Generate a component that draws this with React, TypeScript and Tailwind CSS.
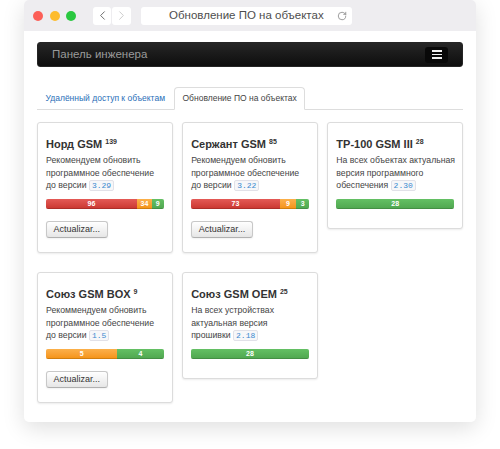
import { ChevronLeft, ChevronRight, RotateCw } from "lucide-react";

type Seg = { value: number; width: string; tone: "red" | "orange" | "green" };

type Product = {
  id: string;
  name: string;
  count: number;
  lines: string[];
  lastLine: string;
  version: string;
  segs: Seg[];
  canUpdate: boolean;
};

const products: Product[] = [
  {
    id: "nord",
    name: "Норд GSM",
    count: 139,
    lines: ["Рекомендуем обновить", "программное обеспечение"],
    lastLine: "до версии",
    version: "3.29",
    segs: [
      { value: 96, width: "77.3%", tone: "red" },
      { value: 34, width: "12.7%", tone: "orange" },
      { value: 9, width: "10%", tone: "green" },
    ],
    canUpdate: true,
  },
  {
    id: "serzhant",
    name: "Сержант GSM",
    count: 85,
    lines: ["Рекомендуем обновить", "программное обеспечение"],
    lastLine: "до версии",
    version: "3.22",
    segs: [
      { value: 73, width: "75.2%", tone: "red" },
      { value: 9, width: "14.3%", tone: "orange" },
      { value: 3, width: "10.5%", tone: "green" },
    ],
    canUpdate: true,
  },
  {
    id: "tr100",
    name: "ТР-100 GSM III",
    count: 28,
    lines: ["На всех объектах актуальная", "версия программного"],
    lastLine: "обеспечения",
    version: "2.30",
    segs: [{ value: 28, width: "100%", tone: "green" }],
    canUpdate: false,
  },
  {
    id: "box",
    name: "Союз GSM BOX",
    count: 9,
    lines: ["Рекоммендуем обновить", "программное обеспечение"],
    lastLine: "до версии",
    version: "1.5",
    segs: [
      { value: 5, width: "60.5%", tone: "orange" },
      { value: 4, width: "39.5%", tone: "green" },
    ],
    canUpdate: true,
  },
  {
    id: "oem",
    name: "Союз GSM OEM",
    count: 25,
    lines: ["На всех устройствах", "актуальная версия"],
    lastLine: "прошивки",
    version: "2.18",
    segs: [{ value: 28, width: "100%", tone: "green" }],
    canUpdate: false,
  },
];

function segClass(tone: Seg["tone"]) {
  if (tone === "red") return "bg-linear-to-b from-[#e45a56] to-[#c9352f]";
  if (tone === "orange") return "bg-linear-to-b from-[#fbb04a] to-[#f5920c]";
  return "bg-linear-to-b from-[#64c064] to-[#4fa64f]";
}

function ProductCard({ p }: { p: Product }) {
  return (
    <div className="rounded-[3px] border border-[#dcdcdc] bg-white px-[8px] pb-[7.5px] pt-[13.5px] text-[9px] leading-[12.5px] shadow-[0_1px_2px_rgba(0,0,0,0.08)]">
      <div className="h-[14px] whitespace-nowrap text-[11px] font-bold leading-[14px] text-[#333]">
        {p.name}{" "}
        <span className="relative top-[-4px] text-[7px] font-bold leading-[8px]">
          {p.count}
        </span>
      </div>

      <div className="mt-[3.5px] text-[8.7px] leading-[12.5px] text-[#444]">
        {p.lines.map((l) => (
          <div key={l} className="h-[12.5px] whitespace-nowrap">
            {l}
          </div>
        ))}
        <div className="h-[12.5px] whitespace-nowrap">
          {p.lastLine}{" "}
          <code className="inline-block rounded-[2px] border border-[#e1e1e8] bg-[#f7f7f9] px-[2px] align-middle font-['Liberation_Mono',monospace] text-[8px] leading-[9px] text-[#3b8ad0]">
            {p.version}
          </code>
        </div>
      </div>

      <div className="mb-[12px] mt-[7px] flex h-[10px] overflow-hidden rounded-[2px] bg-[#f5f5f5] shadow-[inset_0_1px_2px_rgba(0,0,0,0.1)]">
        {p.segs.map((s, i) => (
          <div
            key={i}
            style={{ width: s.width }}
            className={
              "text-center text-[7px] font-bold leading-[10px] text-white shadow-[inset_0_-1px_0_rgba(0,0,0,0.15)] " +
              segClass(s.tone)
            }
          >
            {s.value}
          </div>
        ))}
      </div>

      {p.canUpdate && (
        <button className="mb-[6px] block h-[17.5px] rounded-[3px] border border-[#c8c8c8] border-b-[#b0b0b0] bg-linear-to-b from-white to-[#e6e6e6] px-[6.5px] text-[9px] leading-[15px] text-[#333] shadow-[0_1px_2px_rgba(0,0,0,0.06)]">
          Actualizar...
        </button>
      )}
    </div>
  );
}

export default function App() {
  return (
    <div className="h-[449px] w-[500px] overflow-hidden bg-white font-['Liberation_Sans',Arial,sans-serif]">
      <div className="ml-[24px] flex h-[422px] w-[452px] flex-col overflow-hidden rounded-[5px] bg-white shadow-[0_6px_22px_rgba(0,0,0,0.13)]">
        {/* title bar */}
        <div className="flex h-[31px] shrink-0 items-center bg-[#eeedf0] pl-[9px]">
          <div className="flex items-center gap-[6.7px]">
            <span className="h-[10px] w-[10px] rounded-full bg-[#fc5f57]" />
            <span className="h-[10px] w-[10px] rounded-full bg-[#fdbc2e]" />
            <span className="h-[10px] w-[10px] rounded-full bg-[#2ac840]" />
          </div>
          <div className="ml-[16.5px] flex gap-[1px]">
            <div className="flex h-[18px] w-[18.5px] items-center justify-center rounded-[3px] bg-white">
              <ChevronLeft size={15} strokeWidth={1.4} className="text-[#5a5a5a]" />
            </div>
            <div className="flex h-[18px] w-[18.5px] items-center justify-center rounded-[3px] bg-white">
              <ChevronRight size={15} strokeWidth={1.4} className="text-[#c4c4c4]" />
            </div>
          </div>
          <div className="relative ml-[10px] flex h-[18px] w-[211px] items-center justify-center rounded-[3px] bg-white">
            <span className="text-[11.5px] text-[#4d4d4d]">Обновление ПО на объектах</span>
            <RotateCw
              size={10}
              strokeWidth={1.6}
              className="absolute right-[5px] top-[4px] text-[#707070]"
            />
          </div>
        </div>

        {/* page */}
        <div className="px-[13px] pt-[11px]">
          <div className="flex h-[25px] items-center justify-between rounded-[3px] border border-[#252525] bg-linear-to-b from-[#262626] to-[#0e0e0e] pl-[14px] pr-[14px]">
            <span className="text-[11.5px] text-[#9a9a9a]">Панель инженера</span>
            <div className="flex h-[16px] w-[23px] flex-col items-center justify-center gap-[2px] rounded-[3px] bg-[#080808]">
              <span className="h-[1.5px] w-[10px] bg-[#f0f0f0]" />
              <span className="h-[1.5px] w-[10px] bg-[#f0f0f0]" />
              <span className="h-[1.5px] w-[10px] bg-[#f0f0f0]" />
            </div>
          </div>

          <div className="mt-[20px] flex border-b border-[#dddddd]">
            <div className="-mb-px mr-[1px] flex h-[23px] items-center border border-transparent px-[7.5px] text-[8.5px] text-[#2a6fb8]">
              Удалённый доступ к объектам
            </div>
            <div className="-mb-px flex h-[23px] items-center rounded-t-[4px] border border-[#dddddd] border-b-white bg-white px-[7px] text-[8.5px] text-[#444]">
              Обновление ПО на объектах
            </div>
          </div>

          <div className="mt-[12px] grid grid-cols-3 items-start gap-x-[9.5px] gap-y-[19.5px]">
            {products.map((p) => (
              <ProductCard key={p.id} p={p} />
            ))}
          </div>
        </div>
      </div>
    </div>
  );
}
